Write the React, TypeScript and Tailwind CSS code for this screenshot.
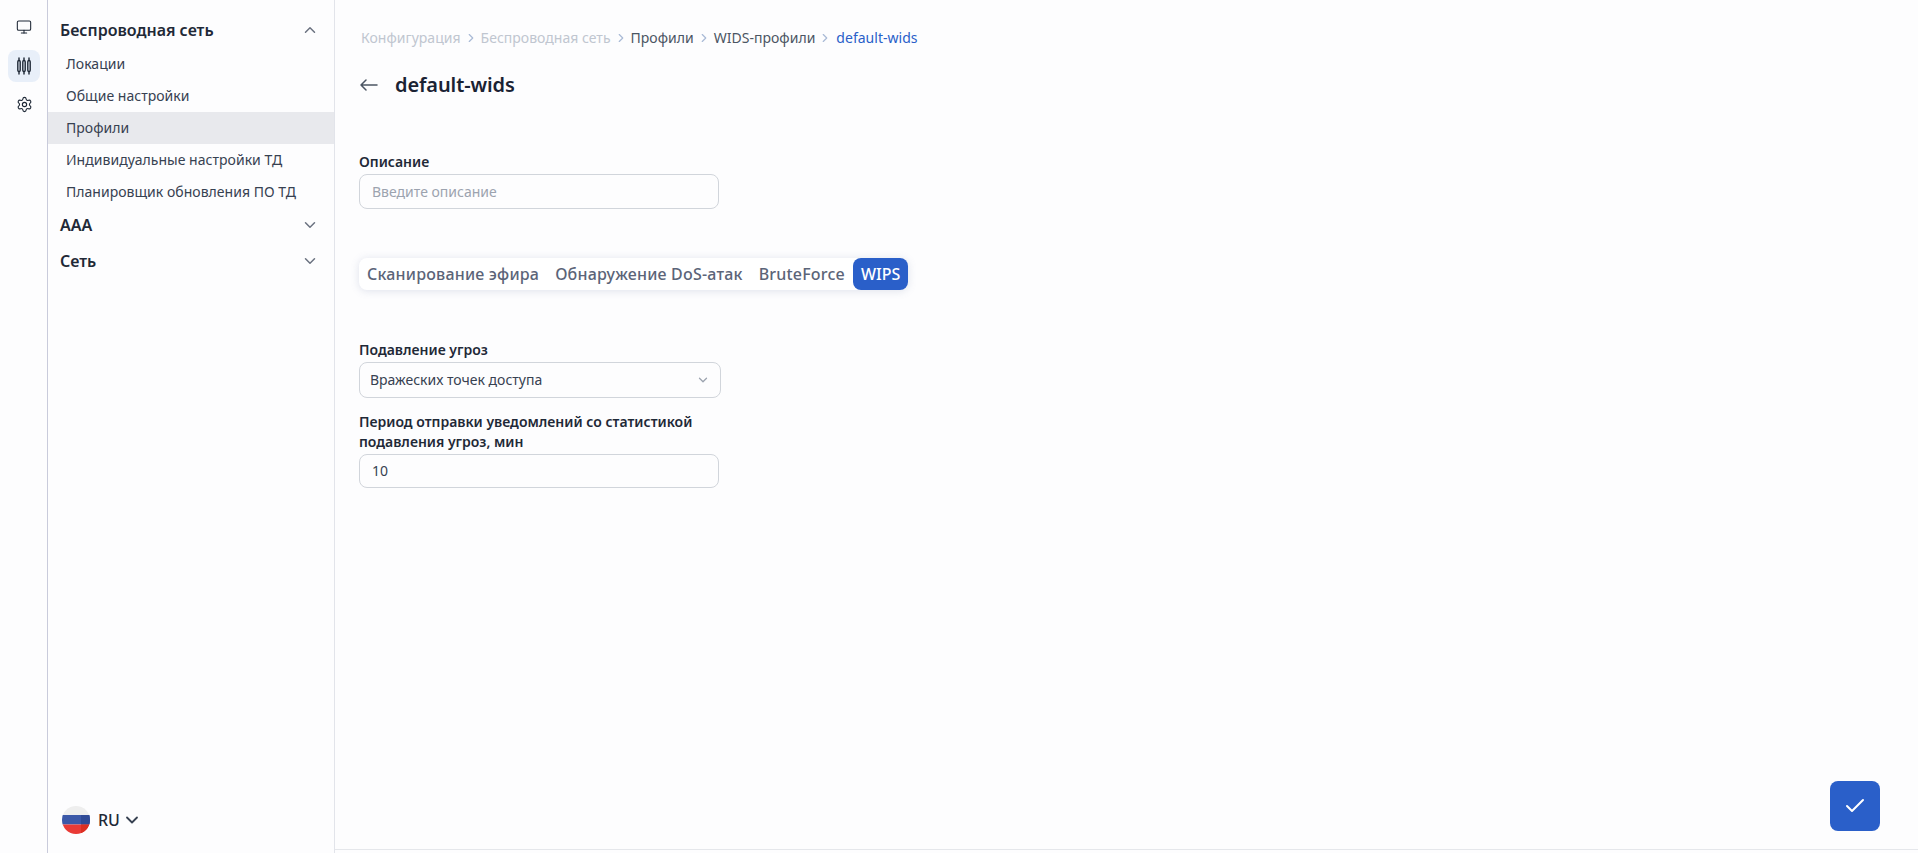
import React from "react";
import { Check, ChevronDown, ChevronRight, ChevronUp, Monitor, Settings } from "lucide-react";

function ProfilesIcon() {
  return (
    <svg width="16" height="18" viewBox="0 0 16 18" fill="none" stroke="#1f2937" strokeWidth="1.4" strokeLinecap="round">
      <path d="M3 1v2.5M3 14.5v2.5M8 1v2.5M8 14.5v2.5M13 1v2.5M13 14.5v2.5" />
      <rect x="1.8" y="3.5" width="2.4" height="11" rx="1.2" />
      <rect x="6.8" y="3.5" width="2.4" height="11" rx="1.2" />
      <rect x="11.8" y="3.5" width="2.4" height="11" rx="1.2" />
    </svg>
  );
}

function BackArrow() {
  return (
    <svg width="18" height="12" viewBox="0 0 18 12" fill="none" stroke="#4b5563" strokeWidth="1.5" strokeLinecap="round" strokeLinejoin="round">
      <path d="M17 6H1M6 1 1 6l5 5" />
    </svg>
  );
}

function Flag() {
  return (
    <svg width="28" height="28" viewBox="0 0 28 28">
      <defs>
        <clipPath id="flag-circle">
          <circle cx="14" cy="14" r="14" />
        </clipPath>
      </defs>
      <g clipPath="url(#flag-circle)">
        <rect width="28" height="9" fill="#eeeeee" />
        <rect y="9" width="28" height="9.5" fill="#3b58a8" />
        <rect y="18.5" width="28" height="9.5" fill="#e93a36" />
        <rect x="19" y="9" width="9" height="9.5" fill="#2f4a96" />
        <rect x="19" y="18.5" width="9" height="9.5" fill="#dc2f22" />
      </g>
    </svg>
  );
}

const breadcrumbs = [
  { label: "Конфигурация", className: "text-[#c0c6d0]" },
  { label: "Беспроводная сеть", className: "text-[#c0c6d0]" },
  { label: "Профили", className: "text-[#4b5563]" },
  { label: "WIDS-профили", className: "text-[#4b5563]" },
];

const menuItems = ["Локации", "Общие настройки", "Профили", "Индивидуальные настройки ТД", "Планировщик обновления ПО ТД"];

const tabs = ["Сканирование эфира", "Обнаружение DoS-атак", "BruteForce"];

function App() {
  return (
    <div className="flex h-[853px] w-full overflow-hidden bg-[#fdfdfe] font-['Noto_Sans',sans-serif] text-[#1f2937]">
      <div className="flex w-[48px] shrink-0 flex-col items-center border-r border-[#c9cbdb] pl-[1px] pt-[11px]">
        <div className="flex h-8 w-8 items-center justify-center">
          <Monitor size={16} strokeWidth={1.6} color="#1f2937" />
        </div>
        <div className="mt-[7px] flex h-8 w-8 items-center justify-center rounded-lg bg-[#e8eff9]">
          <ProfilesIcon />
        </div>
        <div className="mt-[6px] flex h-8 w-8 items-center justify-center">
          <Settings size={17} strokeWidth={1.6} color="#1f2937" />
        </div>
      </div>

      <div className="flex w-[287px] shrink-0 flex-col border-r border-[#e2e4ea] pt-[14px]">
        <div className="flex h-8 items-center justify-between pl-3 pr-[15px]">
          <span className="text-base font-semibold">Беспроводная сеть</span>
          <ChevronUp size={18} color="#6b7280" />
        </div>
        <div className="mt-[2px] flex flex-col">
          {menuItems.map((item) => (
            <div
              key={item}
              className={`flex h-8 items-center pl-[18px] text-sm tracking-[0.03px] text-[#374151] ${item === "Профили" ? "bg-[#e8e9ed]" : ""}`}
            >
              {item}
            </div>
          ))}
        </div>
        <div className="mt-[1px] flex h-8 items-center justify-between pl-3 pr-[15px]">
          <span className="text-base font-semibold">ААА</span>
          <ChevronDown size={18} color="#6b7280" />
        </div>
        <div className="mt-1 flex h-8 items-center justify-between pl-3 pr-[15px]">
          <span className="text-base font-semibold">Сеть</span>
          <ChevronDown size={18} color="#6b7280" />
        </div>
        <div className="mt-auto mb-[19px] flex items-center pl-[14px]">
          <Flag />
          <span className="ml-2 text-base font-medium">RU</span>
          <ChevronDown size={20} strokeWidth={2.2} color="#374151" className="ml-[2px]" />
        </div>
      </div>

      <div className="relative flex min-w-0 flex-1 flex-col">
        <div className="flex-1 pl-[24px] pt-[28px]">
          <div className="ml-[2px] flex h-5 items-center text-sm tracking-[0.02px]">
            {breadcrumbs.map((crumb) => (
              <React.Fragment key={crumb.label}>
                <span className={crumb.className}>{crumb.label}</span>
                <ChevronRight size={14} color="#a9bad6" className="mx-[3px]" />
              </React.Fragment>
            ))}
            <span className="ml-[1px] text-[#2a5fc9]">default-wids</span>
          </div>

          <div className="mt-[17px] flex h-10 items-center pl-[1px]">
            <BackArrow />
            <h1 className="ml-[17px] text-xl font-semibold tracking-[-0.1px] text-[#1a2233]">default-wids</h1>
          </div>

          <label className="mt-[47px] block text-sm font-semibold leading-5">Описание</label>
          <div className="mt-[2px] flex h-[35px] w-[360px] items-center rounded-lg border border-[#d1d5db] px-3 text-sm text-[#9ca3af]">
            Введите описание
          </div>

          <div className="mt-[49px] flex h-8 w-fit items-center rounded-lg bg-white shadow-[0_1px_8px_rgba(100,116,160,0.2)]">
            {tabs.map((tab) => (
              <div key={tab} className="px-2 text-base font-medium tracking-[0.2px] text-[#5b6478]">
                {tab}
              </div>
            ))}
            <div className="flex h-8 items-center rounded-lg bg-[#2a5fc9] px-2 text-base font-medium text-white">WIPS</div>
          </div>

          <label className="mt-[50px] block text-sm font-semibold leading-5">Подавление угроз</label>
          <div className="mt-[2px] flex h-[36px] w-[362px] items-center justify-between rounded-lg border border-[#d1d5db] pl-[10px] pr-[10px] text-sm text-[#374151]">
            <span>Вражеских точек доступа</span>
            <ChevronDown size={14} strokeWidth={2.2} color="#9ca3af" />
          </div>

          <label className="mt-[14px] block w-[360px] text-sm font-semibold leading-5">
            Период отправки уведомлений со статистикой подавления угроз, мин
          </label>
          <div className="mt-[2px] flex h-[34px] w-[360px] items-center rounded-lg border border-[#d1d5db] px-3 text-sm text-[#374151]">
            10
          </div>
        </div>

        <div className="h-[4px] border-t border-[#e5e7eb]" />

        <button className="absolute bottom-[22px] right-[38px] flex h-[50px] w-[50px] items-center justify-center rounded-lg bg-[#2a5fc9]">
          <Check size={24} strokeWidth={2} color="white" />
        </button>
      </div>
    </div>
  );
}

export default App;
